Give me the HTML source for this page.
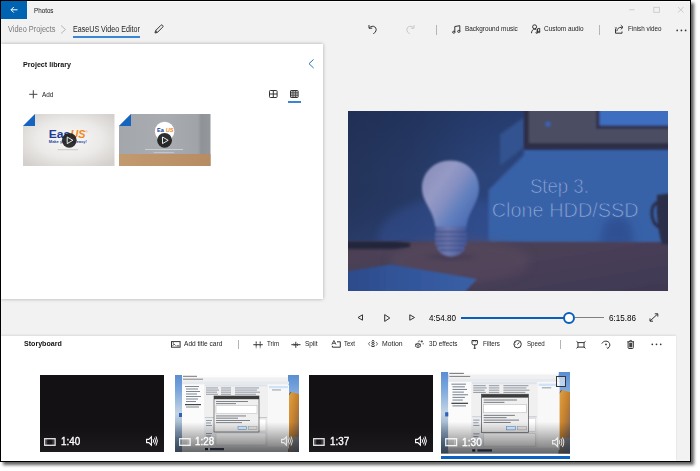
<!DOCTYPE html>
<html><head><meta charset="utf-8"><title>Photos</title>
<style>
html,body{margin:0;padding:0;background:#fff}
body{width:700px;height:471px;position:relative;overflow:hidden;font-family:"Liberation Sans",sans-serif}
#win{position:absolute;left:0;top:0;width:691px;height:462px;box-sizing:border-box;border:1px solid #000;background:#f2f2f2;box-shadow:3px 3px 3px rgba(0,0,0,.62)}
.a{position:absolute}
.t{position:absolute;white-space:nowrap;line-height:normal;transform-origin:0 50%}
svg{position:absolute;overflow:visible}
.ic{fill:none;stroke:#333;stroke-width:1}
.sep{position:absolute;width:1px;background:#b5b5b5}
.dur{-webkit-text-stroke:.35px #fff}

</style></head>
<body>
<div id="win"></div>
<!-- title bar -->
<div class="a" style="left:1px;top:1px;width:689px;height:1px;background:#fafafa"></div>
<div class="a" style="left:1px;top:1px;width:26px;height:17.5px;background:#0063b1"></div>
<svg style="left:10px;top:6px" width="8" height="8" viewBox="0 0 8 8"><path d="M7.5 3.8H1M3.8 1L1 3.8L3.8 6.6" fill="none" stroke="#fff" stroke-width="1"/></svg>
<!-- window controls -->
<svg style="left:628px;top:5px" width="60" height="10" viewBox="0 0 60 10"><g fill="none" stroke="#cacaca" stroke-width="0.9"><path d="M1.3 4.8H6.5"/><rect x="25.8" y="2.3" width="5.6" height="5"/><path d="M50 2L55.6 7.6M55.6 2L50 7.6"/></g></svg>
<!-- header line -->

<!-- breadcrumb chevron -->
<svg style="left:60px;top:24.5px" width="7" height="9" viewBox="0 0 7 9"><path d="M1 0.5L5.5 4.5L1 8.5" fill="none" stroke="#b0b0b0" stroke-width="0.9"/></svg>
<div class="a" style="left:72.5px;top:36.3px;width:67.5px;height:1.6px;background:#3b86d1"></div>
<!-- pencil -->
<svg style="left:154px;top:24px" width="10" height="10" viewBox="0 0 10 10"><path class="ic" d="M1 9L1.6 6.6L6.9 1.3a1.1 1.1 0 0 1 1.6 0l.2.2a1.1 1.1 0 0 1 0 1.600L3.400 8.400Z M1.8 6.500L3.500 8.200" stroke-width="0.9"/></svg>
<!-- undo / redo -->
<svg style="left:368px;top:23.5px" width="10" height="11" viewBox="0 0 10 11"><path class="ic" d="M1 1v3.2h3.200M1.200 4.100C2.600 2.300 5 1.600 6.800 2.900c1.700 1.300 1.800 3.800.3 5.300L5.300 10"/></svg>
<svg style="left:405px;top:23.500px" width="10" height="11" viewBox="0 0 10 11"><path class="ic" style="stroke:#c8c8c8" d="M9 1v3.200H5.800M8.800 4.100C7.400 2.300 5 1.600 3.200 2.900c-1.700 1.300-1.800 3.800-.3 5.300L4.700 10"/></svg>
<div class="sep" style="left:436px;top:25px;height:10px"></div>
<!-- music -->
<svg style="left:452px;top:24.500px" width="9" height="9" viewBox="0 0 9 9"><g class="ic" stroke-width="0.9"><path d="M2.800 7V1.500L7.800 0.700V6.200"/><ellipse cx="1.800" cy="7.200" rx="1.200" ry="1"/><ellipse cx="6.800" cy="6.400" rx="1.200" ry="1"/></g></svg>
<!-- custom audio -->
<svg style="left:530.500px;top:24px" width="10" height="10" viewBox="0 0 10 10"><g class="ic" stroke-width="0.9"><circle cx="3.600" cy="2.800" r="2"/><path d="M0.500 9.200c0-2.400 1.400-4 3.100-4 1 0 1.600.4 2.100 1"/><path d="M6.500 8.500V4.800l2.200-.4v3.500"/><circle cx="5.800" cy="8.600" r=".8"/><circle cx="8" cy="8" r=".8"/></g></svg>
<div class="sep" style="left:599px;top:25px;height:10px"></div>
<!-- finish video -->
<svg style="left:613.500px;top:24px" width="10" height="10" viewBox="0 0 10 10"><g class="ic" stroke-width="0.9"><path d="M1.500 5V9.200H8V7.500"/><path d="M2.800 7.200c.3-2.400 1.900-3.900 4.400-3.900h1.500"/><path d="M6.800 1.200L9 3.300L6.800 5.400"/><path d="M0.800 3.500l1.500.9M3 3.500l-1.400.9" stroke-width="0.700"/></g></svg>
<!-- dots -->
<svg style="left:675.500px;top:28.500px" width="11" height="3" viewBox="0 0 11 3"><g fill="#333"><circle cx="1.200" cy="1.400" r=".85"/><circle cx="5.400" cy="1.400" r=".85"/><circle cx="9.600" cy="1.400" r=".85"/></g></svg>

<!-- project library panel -->
<div class="a" style="left:1px;top:43.500px;width:321.500px;height:255px;background:#fff;box-shadow:0 0 3.500px rgba(0,0,0,.3)"></div>
<div class="a" style="left:0;top:0;width:1px;height:462px;background:#000"></div>
<svg style="left:307.900px;top:59px" width="7" height="10" viewBox="0 0 7 10"><path d="M5.600 0.400L1 4.700L5.600 9" fill="none" stroke="#2373cc" stroke-width="1"/></svg>
<!-- add plus -->
<svg style="left:29px;top:90px" width="9" height="9" viewBox="0 0 9 9"><path class="ic" d="M4.300 0.200V8.400M0.200 4.300H8.400" stroke-width="0.800" style="stroke:#444"/></svg>
<!-- grid icons -->
<svg style="left:268.500px;top:90px" width="9" height="8" viewBox="0 0 9 8"><g class="ic" stroke-width="0.900"><rect x=".5" y=".5" width="7.600" height="7" rx=".8"/><path d="M4.300.500V7.500M.500 4H8.100"/></g></svg>
<svg style="left:290px;top:90px" width="9" height="8" viewBox="0 0 9 8"><g class="ic" stroke-width="0.800"><rect x=".5" y=".5" width="7.600" height="7" rx=".6"/><path d="M3 .500V7.500M5.600 .500V7.500M.500 2.800H8.100M.500 5.200H8.100"/></g><rect x="1" y="1" width="6.600" height="6" fill="#777" opacity=".45"/></svg>
<div class="a" style="left:288.300px;top:101.400px;width:12.600px;height:1.700px;background:#3b86d1"></div>

<!-- library thumbs -->
<svg style="left:22.500px;top:114px" width="92" height="52" viewBox="0 0 92 52">
<defs><radialGradient id="lg1" cx="50%" cy="48%" r="65%"><stop offset="0" stop-color="#f8f8f7"/><stop offset=".55" stop-color="#eceae8"/><stop offset="1" stop-color="#d3d0cd"/></radialGradient></defs>
<path d="M12 0H91.500V52H0V12Z" fill="url(#lg1)"/>
<path d="M0 12L12 0V12Z" fill="#1565c0"/>
<text x="25.800" y="23.700" font-size="10.200" font-weight="700" fill="#1b3c98" font-family="Liberation Sans, sans-serif" textLength="21.500" lengthAdjust="spacingAndGlyphs">Eas</text>
<text x="47.500" y="23.700" font-size="10.200" font-weight="700" fill="#f08a1c" font-style="italic" font-family="Liberation Sans, sans-serif" textLength="15" lengthAdjust="spacingAndGlyphs">US</text>
<text x="62.500" y="18.500" font-size="3" fill="#f08a1c" font-family="Liberation Sans, sans-serif">®</text>
<text x="25.800" y="29.200" font-size="4.300" font-weight="700" fill="#2646a0" font-family="Liberation Sans, sans-serif" textLength="38" lengthAdjust="spacingAndGlyphs">Make your life easy!</text>
<rect x="34.600" y="35.300" width="20.500" height=".9" fill="#c6c4c2"/>
<circle cx="46.300" cy="26.300" r="7.400" fill="#1c1c1c" opacity=".9"/>
<path d="M44.200 23L49.900 26.300L44.200 29.600Z" fill="none" stroke="#fff" stroke-width=".9"/>
</svg>
<svg style="left:118.500px;top:114px" width="92" height="52" viewBox="0 0 92 52">
<defs><linearGradient id="lg2" x1="0" x2="1"><stop offset="0" stop-color="#a3a6ab"/><stop offset=".5" stop-color="#a9acb1"/><stop offset=".86" stop-color="#a0a3a8"/><stop offset=".9" stop-color="#8f9297"/><stop offset="1" stop-color="#94979c"/></linearGradient>
<linearGradient id="lg3" x1="0" x2="1"><stop offset="0" stop-color="#c29a70"/><stop offset="1" stop-color="#b88c62"/></linearGradient></defs>
<path d="M12 0H91.500V52H0V12Z" fill="url(#lg2)"/>
<rect x="0" y="40" width="91.500" height="12" fill="url(#lg3)"/>
<path d="M0 12L12 0V12Z" fill="#1565c0"/>
<circle cx="45.600" cy="17.400" r="9.700" fill="#fff"/>
<text x="38" y="18.300" font-size="5.600" font-weight="700" fill="#1b3c98" font-family="Liberation Sans, sans-serif">Ea</text>
<text x="46.800" y="18.300" font-size="5.600" font-weight="700" font-style="italic" fill="#f08a1c" font-family="Liberation Sans, sans-serif">US</text>
<rect x="26" y="35" width="38" height=".9" fill="#dcdee1" opacity=".75"/>
<rect x="34.600" y="38.300" width="20.500" height=".8" fill="#dcdee1" opacity=".7"/>
<circle cx="45.600" cy="26.300" r="7.400" fill="#1c1c1c" opacity=".92"/>
<path d="M43.500 23L49.200 26.300L43.500 29.600Z" fill="none" stroke="#fff" stroke-width=".9"/>
</svg>

<svg style="left:348.200px;top:111.300px" width="320" height="180" viewBox="0 0 320 180">
<defs>
<linearGradient id="wall" x1="0" x2="1" y1="0" y2="0"><stop offset="0" stop-color="#24345a"/><stop offset=".2" stop-color="#263964"/><stop offset=".38" stop-color="#2a4276"/><stop offset=".55" stop-color="#2c4780"/><stop offset="1" stop-color="#33569a"/></linearGradient>
<linearGradient id="wallv" x1="0" x2="0" y1="0" y2="1"><stop offset="0" stop-color="#182448" stop-opacity=".3"/><stop offset=".35" stop-color="#182448" stop-opacity="0"/><stop offset=".75" stop-color="#4a6cc0" stop-opacity=".15"/></linearGradient>
<linearGradient id="table" x1="0" x2="1" y1="0" y2="1"><stop offset="0" stop-color="#4d3f52"/><stop offset=".45" stop-color="#483f58"/><stop offset="1" stop-color="#3f3852"/></linearGradient>
<linearGradient id="bulb" x1="0.1" y1="0.1" x2=".95" y2=".8"><stop offset="0" stop-color="#898fbb"/><stop offset=".3" stop-color="#959ac5"/><stop offset=".5" stop-color="#858fc1"/><stop offset=".72" stop-color="#6280be"/><stop offset="1" stop-color="#4a6ab2"/></linearGradient>
<linearGradient id="base" x1="0" x2="1"><stop offset="0" stop-color="#59659e"/><stop offset=".4" stop-color="#6d78ae"/><stop offset="1" stop-color="#44579a"/></linearGradient>
<filter id="b1" x="-20%" y="-20%" width="140%" height="140%"><feGaussianBlur stdDeviation="1"/></filter>
<filter id="b3" x="-30%" y="-30%" width="160%" height="160%"><feGaussianBlur stdDeviation="4"/></filter>
<filter id="b15" x="-20%" y="-20%" width="140%" height="140%"><feGaussianBlur stdDeviation="1.500"/></filter>
<filter id="b2" x="-30%" y="-30%" width="160%" height="160%"><feGaussianBlur stdDeviation="2"/></filter>
<clipPath id="pc"><rect width="320" height="180"/></clipPath>
</defs>
<g clip-path="url(#pc)">
<rect width="320" height="180" fill="url(#wall)"/>
<rect width="320" height="180" fill="url(#wallv)"/>
<ellipse cx="105" cy="128" rx="75" ry="42" fill="#3a5cac" opacity=".32" filter="url(#b3)"/>
<!-- lit patch on wall -->
<path d="M140.600 140L140.600 79L176 44L176 38L330 38L330 140Z" fill="#3962a8" filter="url(#b15)"/>
<path d="M152 23.400L176 6.400V36L152 55Z" fill="#31528f" filter="url(#b15)"/>
<!-- mug shadow on wall -->
<path d="M252 135c0-20 8-30 18-30s16 10 16 30Z" fill="#2a4384" opacity=".55" filter="url(#b3)"/>
<!-- picture frame -->
<g filter="url(#b1)">
<rect x="176" y="-5" width="150" height="43.500" fill="#2e2e46"/>
<rect x="181" y="-5" width="145" height="37" fill="#4c4d63"/>
<rect x="248" y="-5" width="78" height="23" fill="#30334e"/>
<rect x="251.500" y="-5" width="75" height="19.500" fill="#3d6ec0"/>
<circle cx="200" cy="13" r="2.600" fill="#3b63b8"/>
</g>
<!-- table -->
<path d="M-5 130.500L325 131L325 185L-5 185Z" fill="url(#table)" filter="url(#b1)"/>
<ellipse cx="112" cy="150" rx="70" ry="22" fill="#5c4b5e" opacity=".5" filter="url(#b3)"/>
<path d="M-3 130.500H47L62 132V136L47 138H-3Z" fill="#1f2038" opacity=".85" filter="url(#b1)"/>
<ellipse cx="103" cy="146" rx="24" ry="3" fill="#2e2a48" opacity=".3" filter="url(#b2)"/>
<!-- paper -->
<linearGradient id="paper" x1="0" x2="1"><stop offset="0" stop-color="#2c4a8a"/><stop offset=".6" stop-color="#34589e"/><stop offset="1" stop-color="#3a60a6"/></linearGradient><path d="M-5 161L43 153.500L129 168L113 185L-5 185Z" fill="url(#paper)" filter="url(#b1)"/>
<!-- mug -->
<g filter="url(#b1)"><path d="M309 84L325 82L325 134L314 133C310 122 308 100 309 84Z" fill="#2b2d48"/><path d="M310 92C301 92 302 114 312 116" fill="none" stroke="#2b2d48" stroke-width="3"/></g>
<!-- bulb -->
<g filter="url(#b1)">
<path d="M102.500 49.500C86 49.500 74 61.500 74 77C74 91 85 98 87.500 116L118.500 116C120.500 99 131 92 131 77C131 61.500 119 49.500 102.500 49.500Z" fill="url(#bulb)"/>
<path d="M88 115.500h30v5.500c1.500 1 1.500 3.500 0 4.500c1.500 1 1.500 3.500 0 4.500c1.500 1 1 3.500 -.500 4.500c-1 6 -6 11 -14.500 11s-13.500 -5 -14.500 -11c-1.500 -1 -2 -3.500 -.500 -4.500c-1.500 -1 -1.500 -3.500 0 -4.500c-1.500 -1 -1.500 -3.500 0 -4.500Z" fill="url(#base)"/>
<path d="M88 121h30M88 125.500h30M88 130h30M89 134.500h28M92 139h22" stroke="#36467e" stroke-width="1.300" opacity=".8"/>
</g>
<!-- text -->
<text x="211.400" y="82.300" text-anchor="middle" font-family="Liberation Sans, sans-serif" font-size="20.500" fill="#a9bde6" fill-opacity=".78" stroke="#3962a8" stroke-width=".75" textLength="59" lengthAdjust="spacingAndGlyphs">Step 3.</text>
<text x="217.200" y="105.500" text-anchor="middle" font-family="Liberation Sans, sans-serif" font-size="20.500" fill="#a9bde6" fill-opacity=".78" stroke="#3962a8" stroke-width=".75" textLength="147" lengthAdjust="spacingAndGlyphs">Clone HDD/SSD</text>
</g>
</svg>


<!-- playback controls -->
<svg style="left:356.500px;top:314px" width="7" height="7" viewBox="0 0 7 7"><path class="ic" d="M5.500 .800V6.200L1 3.500Z" stroke-width=".9"/></svg>
<svg style="left:383.500px;top:313.500px" width="7" height="8" viewBox="0 0 7 8"><path class="ic" d="M.700 .600V7.400L5.800 4Z" stroke-width=".9"/></svg>
<svg style="left:409.200px;top:314px" width="7" height="7" viewBox="0 0 7 7"><path class="ic" d="M.800 .800V6.200L5.500 3.500Z" stroke-width=".9"/></svg>
<div class="a" style="left:461px;top:316.700px;width:104px;height:1.900px;background:#0a5fbd"></div>
<div class="a" style="left:575px;top:317px;width:29px;height:1.400px;background:#808080"></div>
<div class="a" style="left:563.300px;top:311.500px;width:12.200px;height:12.200px;box-sizing:border-box;border:2.200px solid #0a5fbd;border-radius:50%;background:#fff"></div>
<svg style="left:649px;top:313px" width="10" height="9" viewBox="0 0 10 9"><path class="ic" d="M1 8L8.600 1M5.800 .800H8.800V3.600M1 5.400V8.200H4" stroke-width=".9"/></svg>

<!-- storyboard -->
<div class="a" style="left:1px;top:336.200px;width:675px;height:124.800px;background:#fff;box-shadow:0 -1px 2px rgba(0,0,0,.10)"></div>
<div class="a" style="left:0;top:330px;width:1px;height:132px;background:#000"></div>
<!-- storyboard toolbar icons -->
<svg style="left:170.500px;top:340.500px" width="10" height="7" viewBox="0 0 10 7"><g class="ic" stroke-width=".9"><rect x=".5" y=".6" width="8.600" height="5.600"/><path d="M1.500 5l1.600-2l1.500 1.600M5.600 4.800h2.600" stroke-width=".8"/></g><rect x="1.700" y="1.500" width="1.300" height="1" fill="#333"/></svg>
<div class="sep" style="left:238.200px;top:340px;height:8.500px"></div>
<svg style="left:252.500px;top:340.500px" width="10" height="8" viewBox="0 0 10 8"><g class="ic" stroke-width=".9"><path d="M.3 3.700H9.800"/><path d="M3.200 .500V7.200M7.200 .500V7.200" stroke-dasharray="2.200 .8"/></g></svg>
<svg style="left:291px;top:340.500px" width="10" height="8" viewBox="0 0 10 8"><g class="ic" stroke-width=".9"><path d="M.3 3.700H9.500M4.800 .800V6.800"/><path d="M2.600 2.400l1.300 1.300l-1.300 1.300M7 2.400L5.700 3.700L7 5" stroke-width=".7"/></g></svg>
<svg style="left:330.500px;top:340.300px" width="10" height="8" viewBox="0 0 10 8"><g class="ic" stroke-width=".9"><path d="M.8 4.600L2.900 .5L5 4.600M1.500 3.300h2.800" stroke-width=".85"/><path d="M6 1.800H9.300V7.200H1.400V5.800"/></g></svg>
<svg style="left:367.500px;top:340.300px" width="10" height="8" viewBox="0 0 10 8"><g class="ic" stroke-width=".8"><circle cx="5" cy="3.400" r="1.100"/><path d="M5 .3L3.600 1.500M5 .3L6.400 1.500M3.400 5.500Q5 7.800 6.600 5.500M3.600 6.500H6.400"/><path d="M1.900 1.900L.500 3.800L1.900 5.700M8.100 1.900L9.500 3.800L8.100 5.700" stroke-width=".7"/></g></svg>
<svg style="left:415.300px;top:340px" width="9" height="8" viewBox="0 0 9 8"><g class="ic" stroke-width=".9"><path d="M.6 4.200L3 3.200L5.400 4.200V6.600L3 7.600L.6 6.600ZM.6 4.200L3 5.200L5.400 4.200M3 5.200V7.600" stroke-width=".8"/><path d="M3.200 2.200C3.200 1 4.200 .6 5.200 1.200M6.800 .3V2.500M5.700 1.400H7.900M7.600 3.800h1.200" stroke-width=".8"/></g></svg>
<svg style="left:470.800px;top:339.800px" width="8" height="9" viewBox="0 0 8 9"><g class="ic" stroke-width=".9"><path d="M1 .5H6.400V3.400Q6.400 4.800 5 4.800H2.400Q1 4.800 1 3.400Z"/><path d="M3.700 4.800V8.300M2.600 8.300H4.800"/><path d="M2.800 .5V2.200M4.600 .5V2.200" stroke-width=".6"/></g></svg>
<svg style="left:513px;top:339.800px" width="9" height="9" viewBox="0 0 9 9"><g class="ic" stroke-width=".9"><circle cx="4.600" cy="4.200" r="3.700"/><path d="M4.400 4.600L6.200 2.400"/><path d="M2.300 2.300l.7.700M1.600 4.500h.9" stroke-width=".7"/></g></svg>
<div class="sep" style="left:560px;top:340px;height:8.500px"></div>
<svg style="left:576px;top:340.500px" width="10" height="8" viewBox="0 0 10 8"><g class="ic" stroke-width=".9"><rect x="2" y="1.600" width="6" height="4.500"/><path d="M.5 .4L2 1.600M9.500 .4L8 1.600M.5 7.300L2 6.100M9.500 7.300L8 6.100" stroke-width="1"/></g></svg>
<svg style="left:601px;top:339.800px" width="10" height="10" viewBox="0 0 10 10"><g class="ic" stroke-width=".9"><path d="M.8 3.600C2.600 .2 7.400 .4 8.600 3.600C9.400 5.800 8.200 7.400 6.800 8.200"/><path d="M5.600 7.300L6.900 8.500L7.700 6.900" stroke-width=".8"/></g><circle cx="5" cy="4.400" r=".9" fill="#333"/></svg>
<svg style="left:627px;top:339.800px" width="8" height="9" viewBox="0 0 8 9"><g class="ic" stroke-width=".9"><path d="M.3 1.800H7.100M2.400 1.800Q2.400 .4 3.700 .4Q5 .4 5 1.800"/><path d="M1.100 1.800V7.600Q1.100 8.500 2 8.500H5.400Q6.300 8.500 6.300 7.600V1.800"/></g><rect x="2.200" y="3" width="3" height="4.300" fill="#444"/></svg>
<svg style="left:651.200px;top:343.400px" width="11" height="3" viewBox="0 0 11 3"><g fill="#333"><circle cx="1.300" cy="1.300" r=".85"/><circle cx="5.500" cy="1.300" r=".85"/><circle cx="9.700" cy="1.300" r=".85"/></g></svg>

<!-- storyboard thumbs -->
<svg width="0" height="0" style="left:0;top:0"><defs>
<linearGradient id="tov" x1="0" x2="0" y1="0" y2="1"><stop offset="0" stop-color="#000" stop-opacity="0"/><stop offset="1" stop-color="#000" stop-opacity=".55"/></linearGradient>
<linearGradient id="sky" x1="0" x2="0" y1="0" y2="1"><stop offset="0" stop-color="#5a8ed2"/><stop offset=".2" stop-color="#7aa6dc"/><stop offset=".5" stop-color="#c4d4e4"/><stop offset=".75" stop-color="#8aa4c0"/><stop offset="1" stop-color="#7894b4"/></linearGradient>
<linearGradient id="rock" x1="0" x2="1" y1="0" y2="1"><stop offset="0" stop-color="#e0a548"/><stop offset=".45" stop-color="#c8822c"/><stop offset=".8" stop-color="#8a6a50"/><stop offset="1" stop-color="#6a6a78"/></linearGradient>
<g id="film"><rect x=".7" y=".7" width="10.400" height="6.600" fill="none" stroke="#fff" stroke-width="1.300" opacity=".9"/><path d="M2.700 1V7M9.100 1V7" stroke="#fff" stroke-width=".6" opacity=".45"/></g>
<g id="snd"><path d="M.6 3.400H2.800L5.400 .8V9.200L2.800 6.600H.6Z" fill="none" stroke="#fff" stroke-width="1.100"/><path d="M7 3.200Q8.200 5 7 6.800M8.500 1.700Q10.600 5 8.500 8.300M10 .4Q12.800 5 10 9.600" fill="none" stroke="#fff" stroke-width="1"/></g>
<g id="shot">
<rect width="124" height="77" fill="url(#sky)"/>
<path d="M112 0H124V77H112Z" fill="url(#sky)"/>
<path d="M113 77V21L116 17L124 19V77Z" fill="url(#rock)"/><path d="M113 77V21L116 17" fill="none" stroke="#5a4632" stroke-width=".8"/>
<rect x="0" y="62" width="124" height="15" fill="#6f8fb4" opacity=".55"/>
<rect x="7" y="0" width="106" height="74" fill="#f0f0f1"/>
<rect x="7" y="0" width="106" height="2.400" fill="#fdfdfd"/><rect x="8" y=".8" width="14" height="1" fill="#777"/><rect x="8" y="3.700" width="20" height="1" fill="#888"/>
<rect x="7" y="6.500" width="107" height="2.600" fill="#e6e9ee"/>
<rect x="7" y="9.500" width="22" height="64" fill="#fbfbfb"/>
<g fill="#7d8794"><rect x="10" y="11" width="14" height="1"/><rect x="11" y="13.500" width="12" height="1"/><rect x="11" y="16" width="14" height="1"/><rect x="11" y="18.500" width="11" height="1"/><rect x="11" y="21" width="15" height="1"/><rect x="11" y="23.500" width="12" height="1"/><rect x="11" y="26" width="10" height="1"/><rect x="10" y="29" width="16" height="1.200" fill="#444"/><rect x="11" y="31.500" width="13" height="1"/></g>
<rect x="30" y="9.500" width="62" height="2" fill="#dfe3ea"/>
<g fill="#8a929e"><rect x="31" y="12.500" width="12" height=".9"/><rect x="31" y="14.600" width="13" height=".9"/><rect x="31" y="16.700" width="11" height=".9"/><rect x="31" y="18.800" width="12" height=".9"/><rect x="46" y="12.500" width="10" height=".9"/><rect x="46" y="14.600" width="10" height=".9"/><rect x="46" y="16.700" width="10" height=".9"/><rect x="46" y="18.800" width="10" height=".9"/><rect x="60" y="12.500" width="24" height=".9"/><rect x="60" y="14.600" width="22" height=".9"/><rect x="60" y="16.700" width="25" height=".9"/><rect x="60" y="18.800" width="21" height=".9"/></g>
<rect x="93" y="9.500" width="21" height="64" fill="#f8f8f8"/>
<rect x="94" y="11" width="19" height="2.200" fill="#cfe3f7"/>
<rect x="97" y="14.500" width="9" height=".9" fill="#8a929e"/>
<rect x="30" y="42" width="62" height=".8" fill="#b9bec6"/>
<rect x="30" y="43" width="10" height="30" fill="#eceef1"/>
<g fill="#8a929e"><rect x="31" y="45" width="6" height=".9"/><rect x="31" y="47.500" width="5" height=".9"/><rect x="31" y="50" width="6" height=".9"/><rect x="31" y="58" width="6" height=".9"/><rect x="31" y="60.500" width="5" height=".9"/></g>
<rect x="41" y="44" width="50" height="12" fill="#fff" stroke="#c8ccd2" stroke-width=".5"/>
<rect x="41" y="58" width="50" height="12" fill="#fff" stroke="#c8ccd2" stroke-width=".5"/>
<!-- dialog -->
<rect x="39" y="21" width="45" height="36" fill="#f0f0f0" stroke="#555" stroke-width=".7"/>
<rect x="39" y="21" width="45" height="3.200" fill="#3c3c3c"/>
<rect x="41" y="26" width="32" height=".9" fill="#70757d"/><rect x="41" y="28.200" width="20" height=".9" fill="#70757d"/>
<rect x="41" y="30.500" width="41" height="8" fill="#fff" stroke="#b0b4ba" stroke-width=".5"/>
<rect x="41" y="40.500" width="30" height=".9" fill="#70757d"/><rect x="41" y="42.700" width="22" height=".9" fill="#70757d"/><rect x="41" y="45" width="34" height=".9" fill="#70757d"/><rect x="41" y="47.200" width="26" height=".9" fill="#70757d"/>
<rect x="63" y="51.500" width="8.500" height="3.200" fill="#e6f0fb" stroke="#3b86d1" stroke-width=".5"/><rect x="73.500" y="51.500" width="8.500" height="3.200" fill="#e8e8e8" stroke="#a0a0a0" stroke-width=".5"/>
<rect x="4" y="38" width="3" height="4" fill="#2b62b8"/>
<rect x="7" y="71.500" width="106" height="5.500" fill="#e4e6ea"/>
<rect x="30" y="73" width="3" height="2.200" fill="#1e2a3c"/><rect x="35" y="73" width="14" height="2.200" fill="#3a4660"/>
<rect y="47" width="124" height="30" fill="url(#tov)"/>
</g>
</defs></svg>
<!-- thumb1 -->
<div class="a" style="left:40.300px;top:374.500px;width:124px;height:77px;background:#141114"></div>
<div class="a" style="left:40.300px;top:428px;width:124px;height:23.500px;background:linear-gradient(#141114,#1d1a1e)"></div>
<svg style="left:44px;top:437.700px" width="12" height="8" viewBox="0 0 12 8"><use href="#film"/></svg>
<svg style="left:146px;top:436px" width="13" height="10" viewBox="0 0 13 10"><use href="#snd"/></svg>
<!-- thumb2 -->
<svg style="left:174.800px;top:374.500px" width="124" height="77" viewBox="0 0 124 77"><use href="#shot"/></svg>
<svg style="left:178.500px;top:437.700px" width="12" height="8" viewBox="0 0 12 8"><use href="#film"/></svg>
<svg style="left:280.500px;top:436px" width="13" height="10" viewBox="0 0 13 10" opacity=".75"><use href="#snd"/></svg>
<!-- thumb3 -->
<div class="a" style="left:309px;top:374.500px;width:123.500px;height:77px;background:#141114"></div>
<div class="a" style="left:309px;top:428px;width:123.500px;height:23.500px;background:linear-gradient(#141114,#1d1a1e)"></div>
<svg style="left:312.700px;top:437.700px" width="12" height="8" viewBox="0 0 12 8"><use href="#film"/></svg>
<svg style="left:414.500px;top:436px" width="13" height="10" viewBox="0 0 13 10"><use href="#snd"/></svg>
<!-- thumb4 selected -->
<svg style="left:440.600px;top:372.200px" width="129" height="81.500" viewBox="0 0 124 77" preserveAspectRatio="none"><use href="#shot"/></svg>
<svg style="left:444.800px;top:438.200px" width="12.500" height="8.400" viewBox="0 0 12 8"><use href="#film"/></svg>
<svg style="left:551.500px;top:437px" width="13.500" height="10.400" viewBox="0 0 13 10" opacity=".8"><use href="#snd"/></svg>
<div class="a" style="left:555.500px;top:376px;width:10.500px;height:11.400px;box-sizing:border-box;border:1.300px solid #33373d;background:rgba(255,255,255,.55)"></div>
<div class="a" style="left:440.600px;top:456.100px;width:129px;height:2.800px;background:#0a63c2"></div>


<span class="t" style="left:33.5px;top:5.88px;font-size:7.4px;font-weight:400;color:#111;transform:scaleX(0.8473)">Photos</span>
<span class="t" style="left:7.5px;top:24.36px;font-size:8.3px;font-weight:400;color:#7a7a7a;transform:scaleX(0.8902)">Video Projects</span>
<span class="t" style="left:72.9px;top:24.36px;font-size:8.3px;font-weight:400;color:#222;transform:scaleX(0.8586)">EaseUS Video Editor</span>
<span class="t" style="left:465.0px;top:24.20px;font-size:7.6px;font-weight:400;color:#222;transform:scaleX(0.8452)">Background music</span>
<span class="t" style="left:544.2px;top:24.20px;font-size:7.6px;font-weight:400;color:#222;transform:scaleX(0.8451)">Custom audio</span>
<span class="t" style="left:627.5px;top:24.20px;font-size:7.6px;font-weight:400;color:#222;transform:scaleX(0.8265)">Finish video</span>
<span class="t" style="left:22.8px;top:59.63px;font-size:8.0px;font-weight:700;color:#111;transform:scaleX(0.8920)">Project library</span>
<span class="t" style="left:42.3px;top:89.78px;font-size:7.4px;font-weight:400;color:#222;transform:scaleX(0.8665)">Add</span>
<span class="t" style="left:429.2px;top:313.16px;font-size:8.3px;font-weight:400;color:#000;transform:scaleX(0.9752)">4:54.80</span>
<span class="t" style="left:609.2px;top:313.16px;font-size:8.3px;font-weight:400;color:#000;transform:scaleX(0.9752)">6:15.86</span>
<span class="t" style="left:24.4px;top:339.00px;font-size:7.6px;font-weight:700;color:#111;transform:scaleX(0.9330)">Storyboard</span>
<span class="t" style="left:184.2px;top:339.48px;font-size:7.4px;font-weight:400;color:#222;transform:scaleX(0.8878)">Add title card</span>
<span class="t" style="left:266.7px;top:339.48px;font-size:7.4px;font-weight:400;color:#222;transform:scaleX(0.8345)">Trim</span>
<span class="t" style="left:304.8px;top:339.48px;font-size:7.4px;font-weight:400;color:#222;transform:scaleX(0.8756)">Split</span>
<span class="t" style="left:344.2px;top:339.48px;font-size:7.4px;font-weight:400;color:#222;transform:scaleX(0.8111)">Text</span>
<span class="t" style="left:381.7px;top:339.48px;font-size:7.4px;font-weight:400;color:#222;transform:scaleX(0.9285)">Motion</span>
<span class="t" style="left:428.5px;top:339.48px;font-size:7.4px;font-weight:400;color:#222;transform:scaleX(0.8539)">3D effects</span>
<span class="t" style="left:483.0px;top:339.48px;font-size:7.4px;font-weight:400;color:#222;transform:scaleX(0.8447)">Filters</span>
<span class="t" style="left:526.5px;top:339.48px;font-size:7.4px;font-weight:400;color:#222;transform:scaleX(0.8327)">Speed</span>
<span class="t dur" style="left:60.9px;top:434.87px;font-size:11px;font-weight:400;color:#fff;transform:scaleX(0.8963)">1:40</span>
<span class="t dur" style="left:195.3px;top:434.87px;font-size:11px;font-weight:400;color:#fff;transform:scaleX(0.8916)">1:28</span>
<span class="t dur" style="left:329.6px;top:434.87px;font-size:11px;font-weight:400;color:#fff;transform:scaleX(0.8963)">1:37</span>
<span class="t dur" style="left:461.9px;top:435.50px;font-size:11.4px;font-weight:400;color:#fff;transform:scaleX(0.8930)">1:30</span>

</body></html>
